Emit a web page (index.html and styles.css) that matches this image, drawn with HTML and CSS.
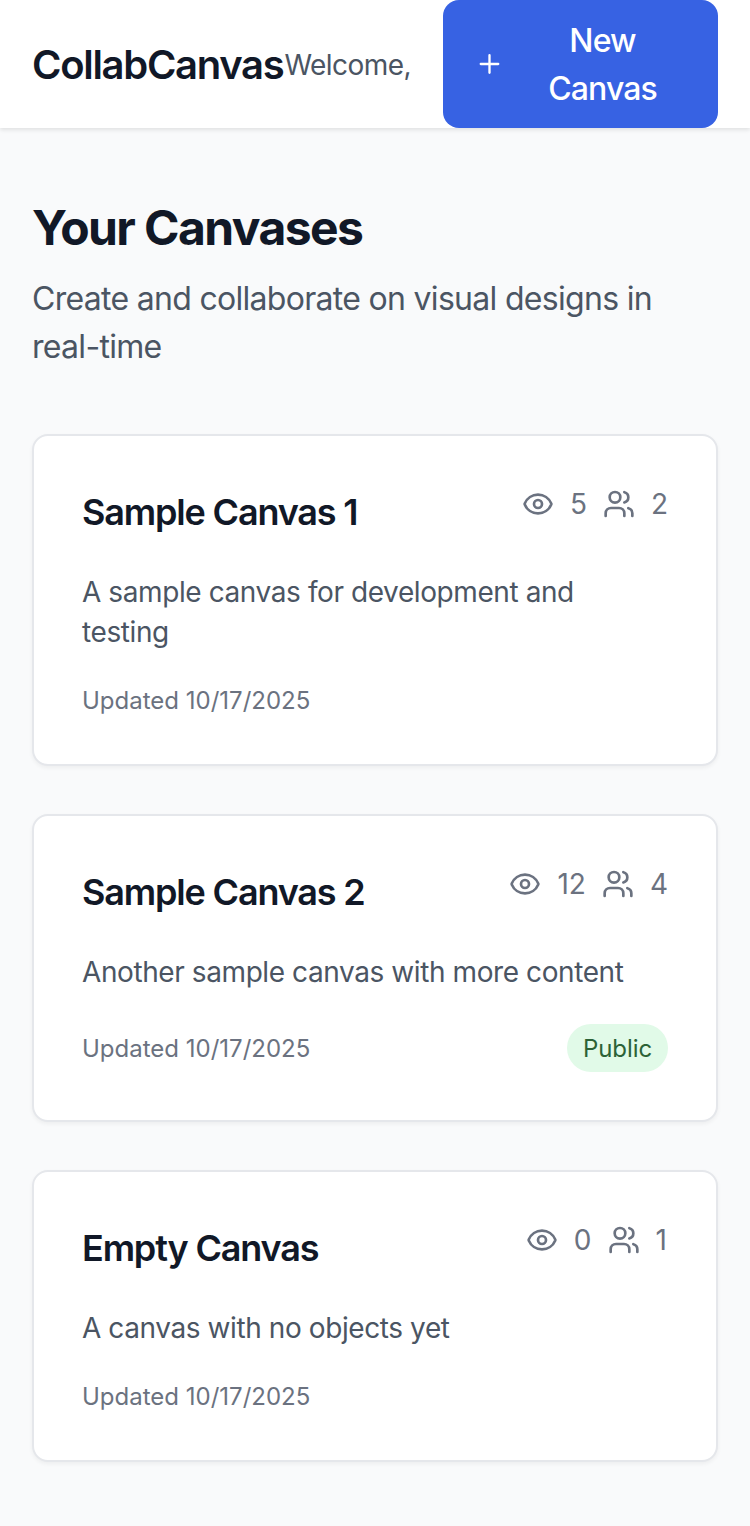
FILE: index.html
```html
<!DOCTYPE html>
<html lang="en">
<head>
<meta charset="utf-8">
<title>CollabCanvas</title>
<link rel="stylesheet" href="styles.css">
</head>
<body>
<svg class="sprite" aria-hidden="true">
  <symbol id="eye" viewBox="0 0 24 24"><path d="M2.062 12.348a1 1 0 0 1 0-.696 10.75 10.75 0 0 1 19.876 0 1 1 0 0 1 0 .696 10.75 10.75 0 0 1-19.876 0"/><circle cx="12" cy="12" r="3"/></symbol>
  <symbol id="users" viewBox="0 0 24 24"><path d="M16 21v-2a4 4 0 0 0-4-4H6a4 4 0 0 0-4 4v2"/><path d="M16 3.128a4 4 0 0 1 0 7.744"/><path d="M22 21v-2a4 4 0 0 0-3-3.87"/><circle cx="9" cy="7" r="4"/></symbol>
  <symbol id="plus" viewBox="0 0 24 24"><path d="M4.5 12h15M12 4.5v15"/></symbol>
</svg>
<header class="header">
  <h1 class="brand">CollabCanvas</h1>
  <div class="actions">
    <span class="welcome">Welcome,</span>
    <button class="new-button"><svg class="icon plus"><use href="#plus"/></svg><span class="new-label">New Canvas</span></button>
  </div>
</header>
<main class="main">
  <h2 class="title">Your Canvases</h2>
  <p class="subtitle">Create and collaborate on visual designs in real-time</p>
  <div class="cards">
    <article class="card">
      <div class="card-head"><h3 class="card-title">Sample Canvas 1</h3><div class="stats"><svg class="icon"><use href="#eye"/></svg><span class="count">5</span><svg class="icon"><use href="#users"/></svg><span class="count">2</span></div></div>
      <p class="description">A sample canvas for development and testing</p>
      <div class="card-foot"><span class="updated">Updated 10/17/2025</span></div>
    </article>
    <article class="card">
      <div class="card-head"><h3 class="card-title">Sample Canvas 2</h3><div class="stats"><svg class="icon"><use href="#eye"/></svg><span class="count">12</span><svg class="icon"><use href="#users"/></svg><span class="count">4</span></div></div>
      <p class="description">Another sample canvas with more content</p>
      <div class="card-foot"><span class="updated">Updated 10/17/2025</span><span class="badge">Public</span></div>
    </article>
    <article class="card">
      <div class="card-head"><h3 class="card-title">Empty Canvas</h3><div class="stats"><svg class="icon"><use href="#eye"/></svg><span class="count">0</span><svg class="icon"><use href="#users"/></svg><span class="count">1</span></div></div>
      <p class="description">A canvas with no objects yet</p>
      <div class="card-foot"><span class="updated">Updated 10/17/2025</span></div>
    </article>
  </div>
</main>
</body>
</html>
```
FILE: styles.css
```css
* { box-sizing: border-box; margin: 0; padding: 0; }
body { background: #f9fafb; color: #111827; font-family: Inter, "Liberation Sans", sans-serif; }
.sprite { display: none; }
.icon { width: 32px; height: 32px; flex: none; fill: none; stroke: currentColor; stroke-width: 2; stroke-linecap: round; stroke-linejoin: round; }
.header { height: 128px; padding: 0 32px; display: flex; align-items: center; justify-content: space-between; background: #fff; box-shadow: 0 2px 4px rgba(0,0,0,.1); white-space: nowrap; }
.brand { padding-top: 2px; font-size: 40px; line-height: 56px; font-weight: 630; letter-spacing: -1.3px; }
.actions { display: flex; align-items: center; gap: 32px; }
.welcome { padding-top: 1px; font-size: 28px; color: #4b5563; letter-spacing: -.55px; }
.new-button { width: 275px; height: 128px; border: 0; border-radius: 16px; background: #3762e3; color: #fff; display: flex; align-items: center; padding: 0 32px; font: 550 32px/48px Inter, sans-serif; }
.plus { width: 29px; height: 28px; }
.new-label { flex: 1; padding: 2px 0 0 15px; white-space: normal; text-align: center; letter-spacing: -.9px; }
.main { padding: 64px 32px; }
.title { font-size: 48px; line-height: 72px; font-weight: 700; letter-spacing: -1.6px; }
.subtitle { margin-top: 11px; font-size: 32px; line-height: 48px; color: #4b5563; letter-spacing: -.7px; }
.cards { margin-top: 63px; display: grid; gap: 48px; }
.card { background: #fff; border: 2px solid #e5e7eb; border-radius: 16px; padding: 48px; box-shadow: 0 2px 4px rgba(0,0,0,.05); }
.card-head { display: flex; justify-content: space-between; align-items: flex-start; height: 56px; }
.card-title { font-size: 36px; line-height: 56px; font-weight: 580; letter-spacing: -1.17px; }
.stats { display: flex; align-items: center; height: 40px; color: #6b7280; font-size: 28px; }
.count { min-width: 12.5px; margin: 0 16px; }
.count:last-child { margin-right: 0; }
.description { max-width: 570px; margin-top: 32px; font-size: 28px; line-height: 40px; color: #4b5563; letter-spacing: -.41px; }
.card-foot { margin: 33px 0 -1px; display: flex; align-items: center; justify-content: space-between; color: #6b7280; font-size: 24px; line-height: 32px; }
.badge { margin: -1px 0 1px; padding: 9px 16px 7px; border-radius: 24px; background: #e1fae8; color: #2c6236; letter-spacing: -.1px; }
```
